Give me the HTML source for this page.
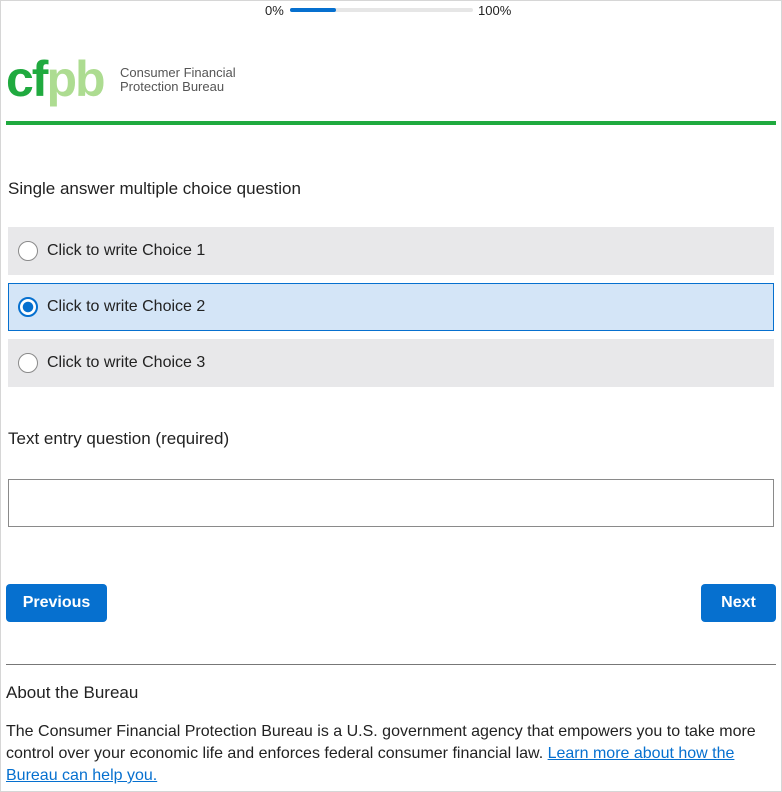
<!DOCTYPE html>
<html><head><style>
*{box-sizing:border-box;margin:0;padding:0}
body{width:782px;height:792px;background:#fff;font-family:"Liberation Sans",sans-serif;color:#222;position:relative;overflow:hidden}
.abs{position:absolute}
.row{position:absolute;left:8px;width:766px;height:48px;background:#e8e8ea;font-size:16px;line-height:48px;padding-left:39px}
.rad{position:absolute;left:10px;top:14px;width:20px;height:20px;border-radius:50%;border:1px solid #8a8a8a;background:#fff}
.btn{position:absolute;top:584px;height:38px;background:#0670cf;color:#fff;font-weight:bold;font-size:16px;line-height:38px;text-align:center;border-radius:4px}
</style></head><body>
<div class="abs" style="left:0;top:0;width:782px;height:792px;border:1px solid #d6d6d6"></div>
<div class="abs" style="left:265px;top:3px;font-size:13px">0%</div>
<div class="abs" style="left:290px;top:8px;width:183px;height:4px;background:#e6e6e6;border-radius:2px"></div>
<div class="abs" style="left:290px;top:8px;width:46px;height:4px;background:#0670cf;border-radius:2px"></div>
<div class="abs" style="left:478px;top:3px;font-size:13px">100%</div>
<div class="abs" style="left:6px;top:44px;font-size:50px;font-weight:bold;letter-spacing:-2px;line-height:70px"><span style="color:#20aa3f">cf</span><span style="color:#addc91">pb</span></div>
<div class="abs" style="left:120px;top:66px;font-size:13px;line-height:14px;color:#555">Consumer Financial<br>Protection Bureau</div>
<div class="abs" style="left:6px;top:121px;width:770px;height:4px;background:#20aa3f"></div>
<div class="abs" style="left:8px;top:179px;font-size:17px">Single answer multiple choice question</div>
<div class="row" style="top:227px"><span class="rad"></span>Click to write Choice 1</div>
<div class="row" style="top:283px;background:#d4e5f7;border:1px solid #0670cf;line-height:46px;padding-left:38px"><span class="rad" style="left:9px;top:13px;border:2px solid #0670cf;background:radial-gradient(circle,#0670cf 0 5px,#fff 5.5px)"></span>Click to write Choice 2</div>
<div class="row" style="top:339px"><span class="rad"></span>Click to write Choice 3</div>
<div class="abs" style="left:8px;top:429px;font-size:17px">Text entry question (required)</div>
<div class="abs" style="left:8px;top:479px;width:766px;height:48px;border:1px solid #8a8a8a"></div>
<div class="btn" style="left:6px;width:101px">Previous</div>
<div class="btn" style="left:701px;width:75px">Next</div>
<div class="abs" style="left:6px;top:664px;width:770px;height:1px;background:#777"></div>
<div class="abs" style="left:6px;top:683px;font-size:17px">About the Bureau</div>
<div class="abs" style="left:6px;top:721px;width:770px;font-size:16px;line-height:22px">The Consumer Financial Protection Bureau is a U.S. government agency that empowers you to take more control over your economic life and enforces federal consumer financial law. <span style="color:#0670cf;text-decoration:underline">Learn more about how the Bureau can help you.</span></div>
</body></html>
